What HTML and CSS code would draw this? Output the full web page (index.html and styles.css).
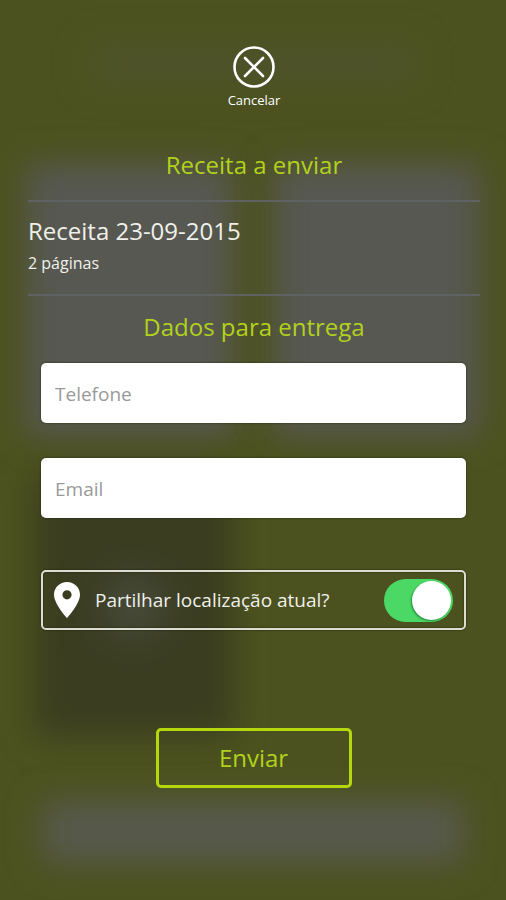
FILE: index.html
```html
<!DOCTYPE html>
<html lang="pt">
<head>
<meta charset="utf-8">
<meta name="viewport" content="width=device-width, initial-scale=1">
<title>Receita a enviar</title>
<link rel="stylesheet" href="styles.css">
</head>
<body>
<div class="backdrop" aria-hidden="true">
  <div class="shade shade-header"></div>
  <div class="tiles">
    <div class="shade shade-tile"></div>
    <div class="shade shade-tile"></div>
    <div class="shade shade-dark"><div class="glow"></div></div>
  </div>
  <div class="shade shade-footer"></div>
</div>
<main class="sheet">
  <button class="cancel" type="button">
    <svg class="cancel-icon" viewBox="0 0 42 42" fill="none" stroke="currentColor" stroke-linecap="round">
      <circle cx="21" cy="21" r="19.500" stroke-width="2.600"/>
      <path d="M12 12L30 30M30 12L12 30" stroke-width="2.600"/>
    </svg>
    <span>Cancelar</span>
  </button>

  <h1 class="heading">Receita a enviar</h1>
  <section class="recipe">
    <h2 class="recipe-title">Receita 23-09-2015</h2>
    <p class="recipe-pages">2 páginas</p>
  </section>

  <h2 class="heading">Dados para entrega</h2>
  <form class="form">
    <input class="field" type="tel" placeholder="Telefone" aria-label="Telefone">
    <input class="field" type="email" placeholder="Email" aria-label="Email">
    <div class="share">
      <svg class="pin" viewBox="0 0 26 36" fill="currentColor" aria-hidden="true">
        <path fill-rule="evenodd" d="M13 0C5.800 0 0 5.600 0 12.700C0 22 13 36 13 36S26 22 26 12.700C26 5.600 20.200 0 13 0ZM13 8.200A4.600 4.600 0 1 1 13 17.400A4.600 4.600 0 1 1 13 8.200Z"/>
      </svg>
      <label class="share-label" for="share">Partilhar localização atual?</label>
      <input class="switch" id="share" type="checkbox" role="switch" checked>
    </div>
    <button class="send" type="submit">Enviar</button>
  </form>
</main>
</body>
</html>
```

FILE: styles.css
```css
* {
  box-sizing: border-box;
}

body {
  position: relative;
  margin: 0;
  min-height: 100vh;
  overflow-x: hidden;
  background: #4c521f;
  color: #f0f0ea;
  font-family: "Open Sans", "Noto Sans", sans-serif;
}

h1, h2, p {
  margin: 0;
  font-weight: 400;
}

/* Blurred page behind the sheet */
.backdrop {
  position: absolute;
  inset: 0;
  padding: 44px 26px 0;
  overflow: hidden;
}

.shade {
  filter: blur(16px);
}

.shade-header {
  height: 40px;
  margin: 0 64px;
  background: #4d532a;
}

.tiles {
  display: grid;
  grid-template-columns: 1fr 1fr;
  grid-template-rows: 272px 260px;
  gap: 40px;
  margin-top: 80px;
}

.shade-tile {
  background: #575852;
}

.shade-dark {
  display: grid;
  place-items: center;
  margin-left: 8px;
  background: #3a3d20;
}

.glow {
  width: 60px;
  height: 60px;
  border-radius: 50%;
  background: #4a4d40;
  filter: blur(12px);
}

.shade-footer {
  height: 64px;
  margin: 64px 16px 0;
  background: #57594c;
}

.sheet {
  position: relative;
  padding: 46px 26px 32px 28px;
}

.cancel {
  display: flex;
  flex-direction: column;
  align-items: center;
  gap: 2px;
  margin: 0 auto;
  padding: 0;
  border: 0;
  background: none;
  color: #fff;
  font: 13px/20px "Open Sans", "Noto Sans", sans-serif;
}

.cancel-icon {
  width: 42px;
  height: 42px;
}

.heading {
  color: #b2d11c;
  font-size: 24px;
  line-height: 32px;
  text-align: center;
}

.cancel + .heading {
  margin: 39px 0 19px;
}

.recipe {
  margin-bottom: 15px;
  padding: 11px 0 17px;
  border: solid #5e6262;
  border-width: 2px 0;
}

.recipe-title {
  font-size: 24px;
  line-height: 36px;
}

.recipe-pages {
  font-size: 16px;
  line-height: 28px;
}

.form {
  display: flex;
  flex-direction: column;
  gap: 35px;
  margin: 20px 14px 0 13px;
}

.field {
  width: 100%;
  height: 60px;
  padding: 2px 14px 0;
  border: 0;
  border-radius: 5px;
  background: #fff;
  box-shadow: 0 0 2px #1c2006;
  color: #333;
  font: 19px/28px "Open Sans", "Noto Sans", sans-serif;
}

.field::placeholder {
  color: #999;
  opacity: 1;
}

.share {
  display: flex;
  align-items: center;
  height: 60px;
  margin-top: 17px;
  padding: 0 11px;
  border: 2px solid #dcddd2;
  border-radius: 5px;
  box-shadow: 0 0 2px #1c2006, inset 0 0 2px #1c2006;
}

.pin {
  width: 26px;
  height: 36px;
  color: #fff;
}

.share-label {
  flex: 1;
  padding-left: 15px;
  font-size: 19px;
  line-height: 28px;
}

.switch {
  width: 69px;
  height: 43px;
  margin: 0;
  padding: 2px;
  appearance: none;
  border-radius: 22px;
  background: #85887a;
}

.switch::before {
  display: block;
  width: 39px;
  height: 39px;
  border-radius: 50%;
  background: #fff;
  box-shadow: -1px 1px 2px #1f8f3e;
  content: "";
}

.switch:checked {
  background: #4cd864;
}

.switch:checked::before {
  margin-left: auto;
}

.send {
  align-self: center;
  width: 196px;
  height: 60px;
  margin-top: 63px;
  border: 3px solid #b4d70d;
  border-radius: 5px;
  background: none;
  color: #b2d11c;
  font: 24px/32px "Open Sans", "Noto Sans", sans-serif;
}
```
